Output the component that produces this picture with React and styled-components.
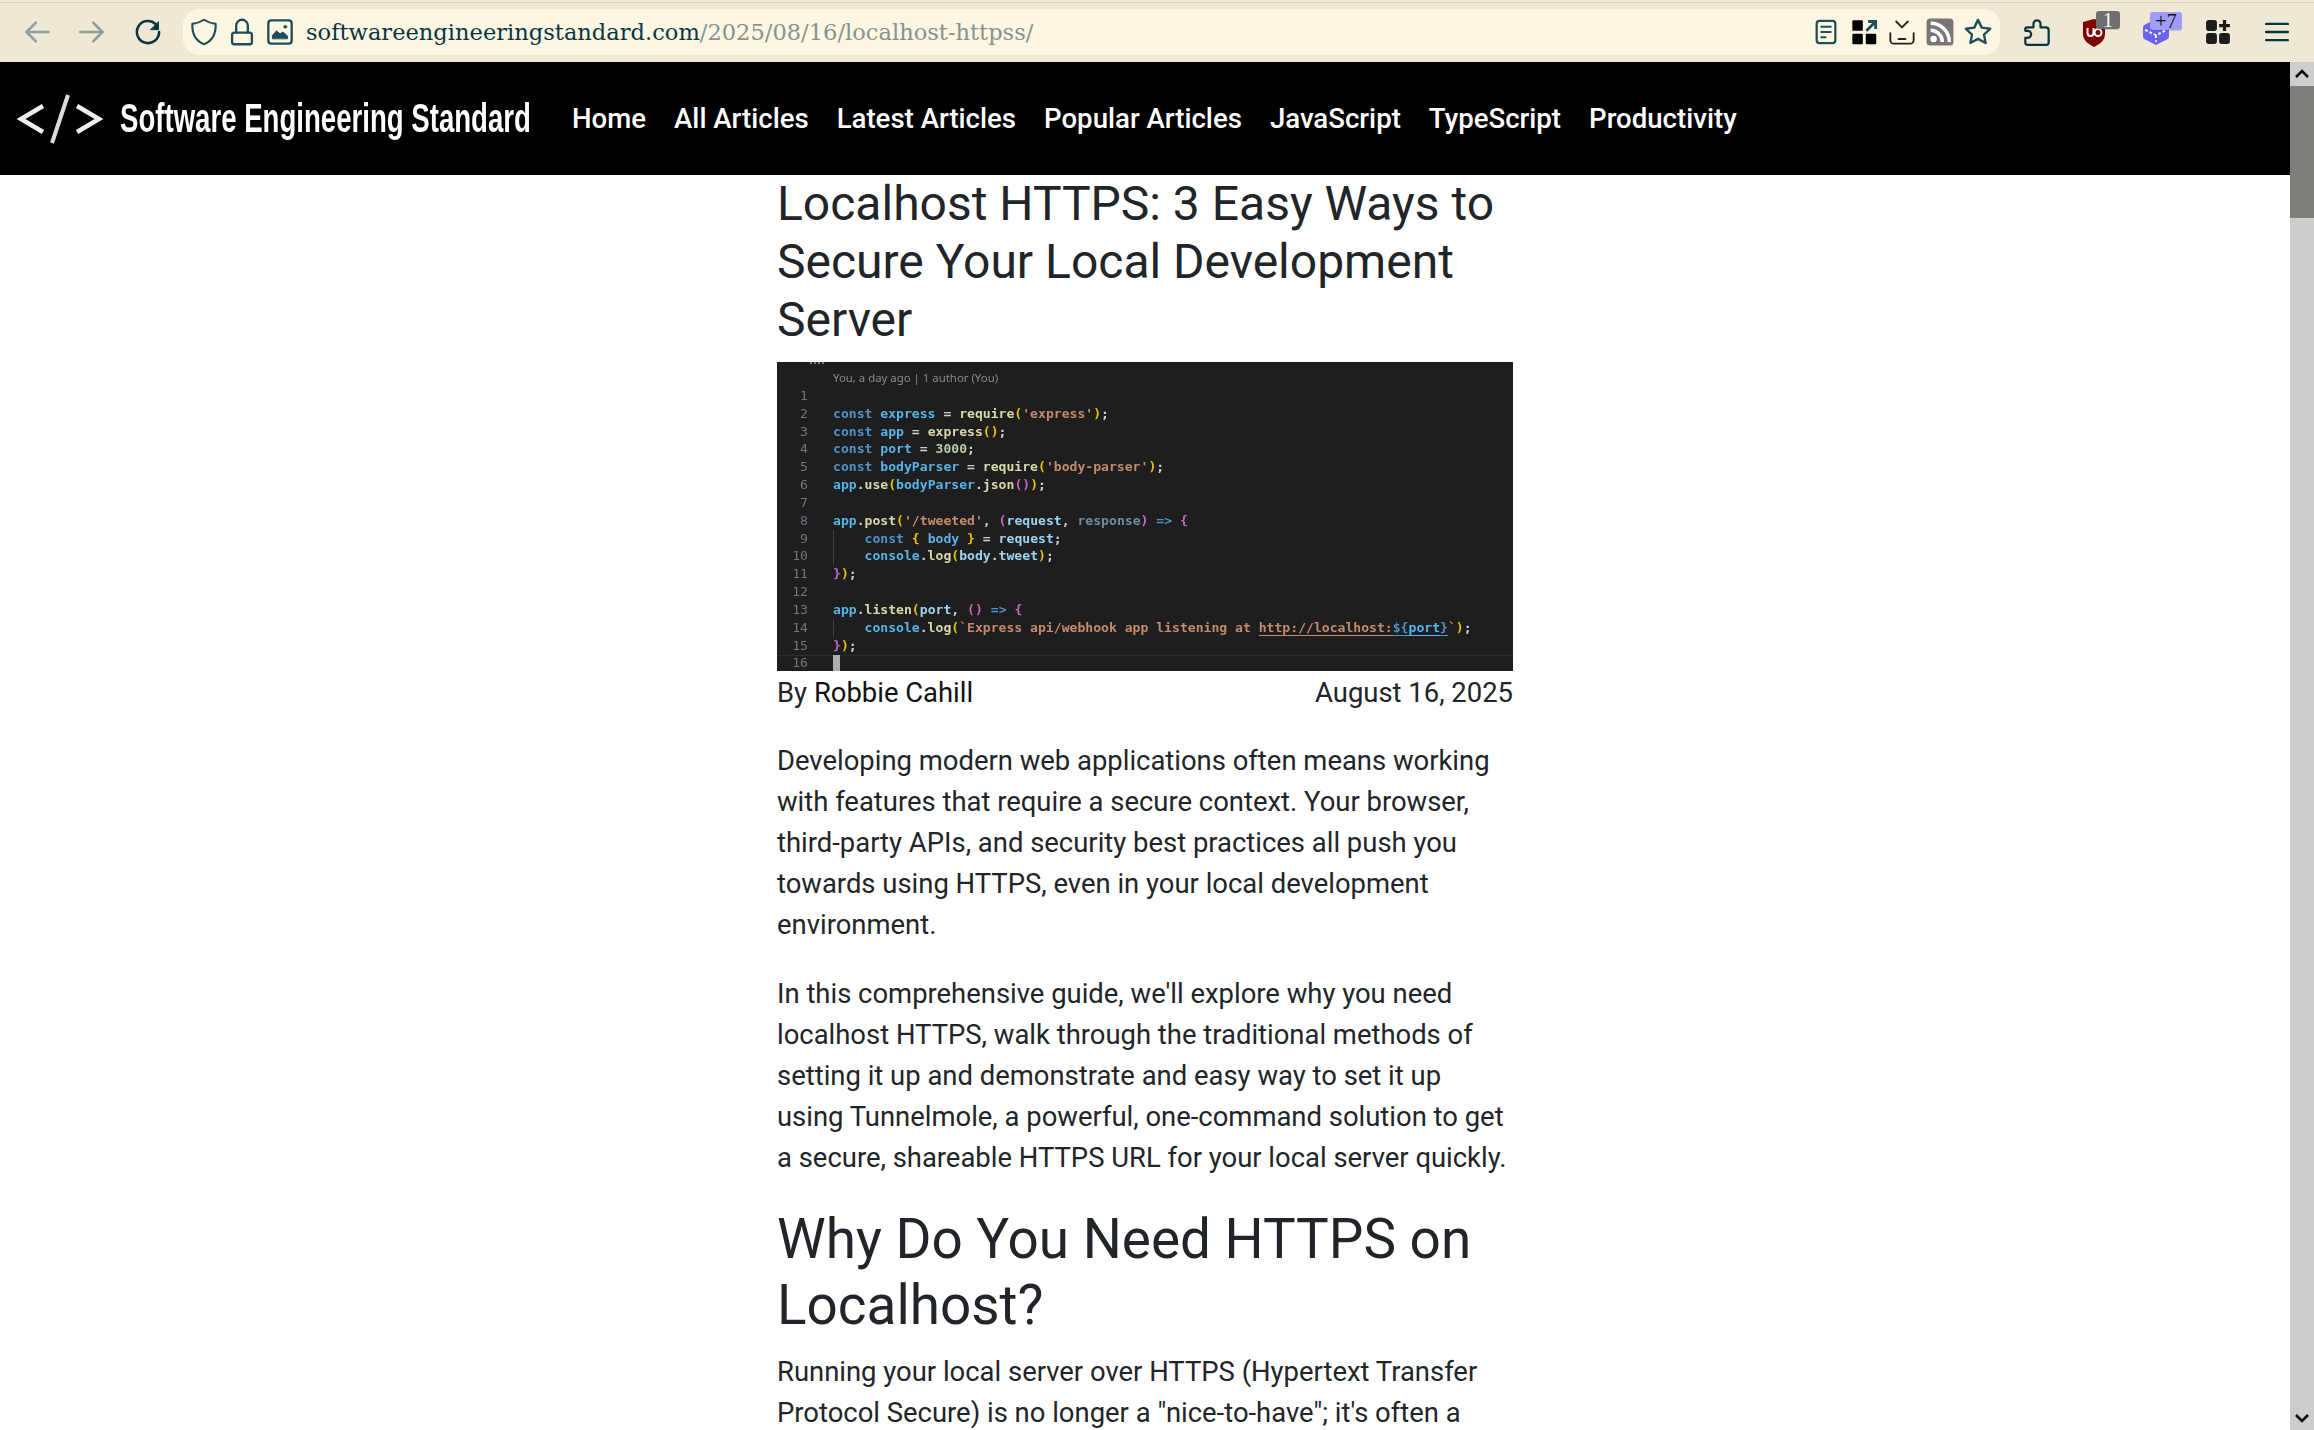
import React from 'react';
import styled, { createGlobalStyle } from 'styled-components';

const GlobalStyle = createGlobalStyle`
  html, body {
    margin: 0;
    padding: 0;
    height: 100%;
    overflow: hidden;
    background: #fff;
  }
  body {
    font-family: Roboto, "Liberation Sans", sans-serif;
    color: #212529;
  }
`;

const Window = styled.div`
  display: flex;
  flex-direction: column;
  height: 1430px;
  overflow: hidden;
`;

const Toolbar = styled.header`
  display: flex;
  align-items: center;
  box-sizing: border-box;
  height: 62px;
  flex: none;
  padding-top: 2px;
  background: linear-gradient(#eee8d5 0 2px, #d9d3c1 2px 3px, #eee8d5 3px);
`;

const NavButton = styled.span`
  display: flex;
  align-items: center;
  justify-content: center;
  width: ${(props) => props.$width || 38}px;
  flex: none;
  position: relative;
  color: ${(props) => (props.$dim ? '#8f9f9c' : '#073642')};
`;

const BackGroup = styled.div`
  display: flex;
  align-items: center;
  padding-left: 9px;
  width: 183px;
  box-sizing: border-box;
  flex: none;
`;

const UrlBar = styled.div`
  display: flex;
  align-items: center;
  box-sizing: border-box;
  width: 1817px;
  height: 46px;
  flex: none;
  padding: 0 3px 0 2px;
  background: #fdf6e3;
  border-radius: 16px;
`;

const UrlIcon = styled.span`
  display: flex;
  align-items: center;
  justify-content: center;
  width: 38px;
  flex: none;
  color: #1f4e5a;
`;

const UrlText = styled.div`
  flex: 1;
  font-family: "DejaVu Serif", serif;
  font-size: 22.57px;
  color: #073642;
  padding-left: 7px;
  white-space: nowrap;
`;

const UrlPath = styled.span`
  color: #86938f;
`;

const ToolbarEnd = styled.div`
  display: flex;
  align-items: center;
  flex: 1;
  padding-left: 18px;
`;

const Badge = styled.span`
  position: absolute;
  top: -7px;
  left: ${(props) => props.$left}px;
  height: 18px;
  width: ${(props) => props.$wide}px;
  border-radius: 3px;
  font-family: "Liberation Serif", serif;
  font-size: 20px;
  line-height: 18px;
  text-align: center;
  color: ${(props) => props.$color};
  background: ${(props) => props.$bg};
  box-shadow: 0 1px 1px rgba(0, 0, 0, 0.15);
`;

const Body = styled.div`
  display: flex;
  flex: 1;
  min-height: 0;
`;

const Page = styled.div`
  flex: 1;
  min-width: 0;
  overflow: hidden;
`;

const Scrollbar = styled.div`
  display: flex;
  flex-direction: column;
  width: 24px;
  flex: none;
  background: #cdcdcd;
`;

const ScrollButton = styled.div`
  display: flex;
  align-items: center;
  justify-content: center;
  height: 24px;
  flex: none;
`;

const ScrollThumb = styled.div`
  height: 132px;
  flex: none;
  background: #7f7f7a;
`;

const ScrollTrack = styled.div`
  flex: 1;
`;

const SiteNav = styled.nav`
  display: flex;
  align-items: center;
  height: 113px;
  background: #000;
  padding-left: 16px;
`;

const Logo = styled.svg`
  width: 88px;
  height: 50px;
  flex: none;
`;

const BrandBox = styled.div`
  width: 452px;
  margin-left: 16px;
  flex: none;
`;

const Brand = styled.span`
  display: inline-block;
  font-family: "Liberation Sans", sans-serif;
  font-size: 41px;
  font-weight: 700;
  color: #fff;
  white-space: nowrap;
  transform-origin: left center;
  transform: scaleX(0.673);
`;

const NavLinks = styled.div`
  display: flex;
  gap: 28px;
`;

const NavLink = styled.a`
  font-size: 27.6px;
  font-weight: 500;
  color: #fff;
  white-space: nowrap;
`;

const Article = styled.article`
  width: 736px;
  margin: 0 auto;
  font-size: 27.43px;
  line-height: 41.14px;
`;

const Title = styled.h1`
  margin: 0 0 13px;
  font-size: 48px;
  line-height: 58px;
  font-weight: 400;
`;

const CodeShot = styled.div`
  box-sizing: border-box;
  position: relative;
  height: 309px;
  padding-top: 7px;
  overflow: hidden;
  background: #1e1e1e;
  font-family: "DejaVu Sans Mono", monospace;
  font-size: 13.1px;
  line-height: 17.85px;
  font-weight: 700;
  color: #9cdcfe;
  filter: blur(0.4px);
`;

const TopSpecks = styled.span`
  position: absolute;
  top: 0;
  left: 33px;
  width: 14px;
  border-top: 2px dotted #777;
`;

const Blame = styled.div`
  padding-left: 56px;
  font-family: "Noto Sans", sans-serif;
  font-size: 11.4px;
  font-weight: 400;
  color: #8a8a8a;
`;

const CodeLine = styled.div`
  display: flex;
  white-space: pre;
`;

const LastLine = styled(CodeLine)`
  height: 16px;
  line-height: 16px;
  box-shadow: inset 0 1px 0 #2c2c2c;
`;

const Gutter = styled.span`
  width: 31px;
  flex: none;
  text-align: right;
  color: #6e7681;
  font-weight: 400;
  margin-right: 25px;
`;

const CodeText = styled.span`
  box-shadow: ${(props) => (props.$guide ? 'inset 1px 0 0 #404040' : 'none')};
`;

const Token = styled.span`
  position: relative;
  color: ${(props) => props.$c};
  ${(props) => props.$under && `box-shadow: 0 1px 0 ${props.$c};`}
  ${(props) => props.$dots && `
    &::after {
      content: '...';
      position: absolute;
      left: 0;
      top: 6px;
      font-size: 7px;
      font-weight: 400;
      letter-spacing: 0;
      color: #999;
    }
  `}
`;

const Cursor = styled.span`
  display: inline-block;
  width: 7px;
  height: 16px;
  background: #aeafad;
`;

const Byline = styled.div`
  display: flex;
  justify-content: space-between;
  padding-top: 2px;
  margin-bottom: 26.5px;
`;

const Author = styled.a`
  color: #111;
`;

const Paragraph = styled.p`
  margin: 0 0 27.43px;
`;

const SectionTitle = styled.h2`
  margin: 0 0 13.7px;
  font-size: 54.86px;
  line-height: 65.8px;
  font-weight: 400;
`;

const Stroke = ({ size = 28, sw = 2.2, children }) => (
  <svg
    width={size}
    height={size}
    viewBox="0 0 24 24"
    fill="none"
    stroke="currentColor"
    strokeWidth={sw}
    strokeLinecap="round"
    strokeLinejoin="round"
  >
    {children}
  </svg>
);

const kw = '#4e92c9';
const vr = '#55b4e8';
const nm = '#9cd3f2';
const fn = '#d8d8a8';
const st = '#c48a6c';
const pu = '#cfcfcf';
const y1 = '#e8c300';
const p1 = '#c868c4';
const dg = '#6f8ba0';

const codeLines = [
  { tokens: [] },
  { tokens: [[kw, 'const '], [vr, 'express'], [pu, ' = '], [fn, 'require', 0, 1], [y1, '('], [st, "'express'"], [y1, ')'], [pu, ';']] },
  { tokens: [[kw, 'const '], [vr, 'app'], [pu, ' = '], [fn, 'express'], [y1, '()'], [pu, ';']] },
  { tokens: [[kw, 'const '], [vr, 'port'], [pu, ' = '], ['#b5cea8', '3000'], [pu, ';']] },
  { tokens: [[kw, 'const '], [vr, 'bodyParser'], [pu, ' = '], [fn, 'require'], [y1, '('], [st, "'body-parser'"], [y1, ')'], [pu, ';']] },
  { tokens: [[vr, 'app'], [pu, '.'], [fn, 'use'], [y1, '('], [vr, 'bodyParser'], [pu, '.'], [fn, 'json'], [p1, '()'], [y1, ')'], [pu, ';']] },
  { tokens: [] },
  { tokens: [[vr, 'app'], [pu, '.'], [fn, 'post'], [y1, '('], [st, "'/tweeted'"], [pu, ', '], [p1, '('], [nm, 'request'], [pu, ', '], [dg, 'response'], [p1, ')'], [kw, ' => '], [p1, '{']] },
  { guide: true, tokens: [[kw, '    const '], [y1, '{ '], [vr, 'body'], [y1, ' }'], [pu, ' = '], [nm, 'request'], [pu, ';']] },
  { guide: true, tokens: [[vr, '    console'], [pu, '.'], [fn, 'log'], [y1, '('], [nm, 'body'], [pu, '.'], [nm, 'tweet'], [y1, ')'], [pu, ';']] },
  { tokens: [[p1, '}'], [y1, ')'], [pu, ';']] },
  { tokens: [] },
  { tokens: [[vr, 'app'], [pu, '.'], [fn, 'listen'], [y1, '('], [nm, 'port'], [pu, ', '], [p1, '()'], [kw, ' => '], [p1, '{']] },
  { guide: true, tokens: [[vr, '    console'], [pu, '.'], [fn, 'log'], [y1, '('], [st, '`Express api/webhook app listening at '], [st, 'http://localhost:', 1], [kw, '${', 1], ['#4fb8f5', 'port', 1], [kw, '}', 1], [st, '`'], [y1, ')'], [pu, ';']] },
  { tokens: [[p1, '}'], [y1, ')'], [pu, ';']] },
];

const navItems = [
  'Home',
  'All Articles',
  'Latest Articles',
  'Popular Articles',
  'JavaScript',
  'TypeScript',
  'Productivity',
];

const App = () => (
  <Window>
    <GlobalStyle />
    <Toolbar>
      <BackGroup>
        <NavButton $dim $width={55.5}>
          <Stroke><path d="M22 12H3" /><path d="M11 4l-8 8 8 8" /></Stroke>
        </NavButton>
        <NavButton $dim $width={55.5}>
          <Stroke><path d="M2 12h19" /><path d="M13 4l8 8-8 8" /></Stroke>
        </NavButton>
        <NavButton $width={55.5}>
          <Stroke>
            <path d="M21.500 12a9.500 9.500 0 1 1-3-6.900" />
            <path d="M21 3.500v6.500h-6.500z" fill="currentColor" strokeWidth="0.800" />
          </Stroke>
        </NavButton>
      </BackGroup>
      <UrlBar>
        <UrlIcon>
          <Stroke sw={1.8}><path d="M12 1.500c3 2 6 3 10 3.500.3 8-2 14.500-10 17.500C4 19.500 1.700 13 2 5c4-.5 7-1.500 10-3.500z" /></Stroke>
        </UrlIcon>
        <UrlIcon>
          <Stroke sw={2}><rect x="3.500" y="12.500" width="17" height="10" rx="2" /><path d="M7 12.500V6.500a5 5 0 0 1 10 0v6" /></Stroke>
        </UrlIcon>
        <UrlIcon>
          <Stroke sw={2}>
            <rect x="2" y="2" width="20" height="20" rx="2.500" />
            <path d="M5.500 17.500v-2.500l3.500-4 3 2.500 2.500-1.500 4 3.500v2z" fill="currentColor" strokeWidth="0.800" />
            <circle cx="16.500" cy="7.500" r="1.300" fill="currentColor" strokeWidth="0.500" />
          </Stroke>
        </UrlIcon>
        <UrlText>
          softwareengineeringstandard.com<UrlPath>/2025/08/16/localhost-httpss/</UrlPath>
        </UrlText>
        <UrlIcon>
          <Stroke sw={1.9}>
            <rect x="4" y="2.500" width="16" height="19" rx="2.500" />
            <path d="M8 7.500h8M8 12h8M8 16.500h3.500" />
          </Stroke>
        </UrlIcon>
        <UrlIcon>
          <svg width="28" height="28" viewBox="0 0 24 24">
            <rect x="2" y="2" width="9" height="9" rx="1" fill="#000" />
            <rect x="2" y="13.500" width="9" height="9" rx="1" fill="#000" />
            <rect x="13.500" y="13.500" width="9" height="9" rx="1" fill="#000" />
            <path d="M14 11l7-7M15.500 3H22V9.500" stroke="#1f4e5a" strokeWidth="2.400" fill="none" />
          </svg>
        </UrlIcon>
        <UrlIcon>
          <svg width="28" height="28" viewBox="0 0 24 24" fill="none" stroke="#222" strokeWidth="1.600" strokeLinecap="round" strokeLinejoin="round">
            <path d="M7 3l5 5 5-5" />
            <path d="M2 13v6a3 3 0 0 0 3 3h14a3 3 0 0 0 3-3v-6" />
            <path d="M9 18h6" />
          </svg>
        </UrlIcon>
        <UrlIcon>
          <svg width="28" height="28" viewBox="0 0 24 24">
            <rect x="0.500" y="0.500" width="23" height="23" rx="3" fill="#777" />
            <circle cx="6.500" cy="18" r="2.800" fill="#fff" />
            <path d="M4 10.500A10 10 0 0 1 14 20.500" stroke="#fff" strokeWidth="3" fill="none" />
            <path d="M4 4.500A16 16 0 0 1 20 20.500" stroke="#fff" strokeWidth="3" fill="none" />
          </svg>
        </UrlIcon>
        <UrlIcon>
          <Stroke sw={1.9} size={30}><path d="M12 2.300l3 6.200 6.800.9-5 4.700 1.300 6.700-6.100-3.300-6.100 3.300 1.300-6.700-5-4.700 6.800-.9z" /></Stroke>
        </UrlIcon>
      </UrlBar>
      <ToolbarEnd>
        <NavButton $width={38}>
          <Stroke sw={1.9} size={28}>
            <path d="M4 23a2 2 0 0 1-2-2v-4h2a3 3 0 0 0 0-6H2V9.500A1.500 1.500 0 0 1 3.500 8H9V5a3 3 0 0 1 6 0v3h4.500A2.500 2.500 0 0 1 22 10.500V21a2 2 0 0 1-2 2z" />
          </Stroke>
        </NavButton>
        <NavButton $width={19} />
        <NavButton $width={38}>
          <svg width="24" height="29" viewBox="0 0 24 29">
            <path d="M12 1l11 3v12c0 6-5 10-11 13C6 26 1 22 1 16V4z" fill="#800000" />
            <path d="M5.500 10v5a3 3 0 0 0 6 0v-5" stroke="#fff" strokeWidth="2" fill="none" />
            <circle cx="16" cy="14.500" r="3.500" stroke="#fff" strokeWidth="2" fill="none" />
          </svg>
          <Badge $left={21} $wide={24} $color="#fff" $bg="#6f6f6f">1</Badge>
        </NavButton>
        <NavButton $width={24} />
        <NavButton $width={38}>
          <svg width="26" height="26" viewBox="0 0 24 24">
            <path d="M12 0l10 5c1 .5 2 1.500 2 3v8c0 1.500-1 2.500-2 3l-10 5-10-5c-1-.5-2-1.500-2-3V8c0-1.500 1-2.500 2-3z" fill="#6b63f0" />
            <path d="M2 10l10 5 10-5M12 15v6" stroke="#fff" strokeWidth="1.800" strokeDasharray="2.500 2" fill="none" />
          </svg>
          <Badge $left={13} $wide={32} $color="#111" $bg="#a09cf8">+7</Badge>
        </NavButton>
        <NavButton $width={24} />
        <NavButton $width={38}>
          <svg width="26" height="26" viewBox="0 0 24 24" fill="#1c1c1c">
            <rect x="1" y="1" width="10" height="10" rx="2.500" />
            <rect x="1" y="13" width="10" height="10" rx="2.500" />
            <rect x="13" y="13" width="10" height="10" rx="2.500" />
            <path d="M16.500 1h3v3.500H23v3h-3.500V11h-3V7.500H13v-3h3.500z" />
          </svg>
        </NavButton>
        <NavButton $width={21} />
        <NavButton $width={38}>
          <Stroke sw={2.200} size={26}><path d="M2 4.500h20M2 12h20M2 19.500h20" /></Stroke>
        </NavButton>
      </ToolbarEnd>
    </Toolbar>
    <Body>
      <Page>
        <SiteNav>
          <Logo viewBox="0 0 88 50">
            <path d="M27 12L5 25l22 13M61 12l22 13-22 13" stroke="#eee" strokeWidth="4.500" fill="none" />
            <path d="M52 1L36 49" stroke="#ddd" strokeWidth="4" fill="none" />
          </Logo>
          <BrandBox>
            <Brand>Software Engineering Standard</Brand>
          </BrandBox>
          <NavLinks>
            {navItems.map((item) => (
              <NavLink key={item}>{item}</NavLink>
            ))}
          </NavLinks>
        </SiteNav>
        <Article>
          <Title>Localhost HTTPS: 3 Easy Ways to Secure Your Local Development Server</Title>
          <CodeShot>
            <TopSpecks />
            <Blame>You, a day ago | 1 author (You)</Blame>
            {codeLines.map((line, i) => (
              <CodeLine key={i}>
                <Gutter>{i + 1}</Gutter>
                <CodeText $guide={line.guide}>
                  {line.tokens.map(([c, text, under, dots], j) => (
                    <Token key={j} $c={c} $under={under} $dots={dots}>{text}</Token>
                  ))}
                </CodeText>
              </CodeLine>
            ))}
            <LastLine>
              <Gutter>16</Gutter>
              <Cursor />
            </LastLine>
          </CodeShot>
          <Byline>
            <span>By <Author>Robbie Cahill</Author></span>
            <span>August 16, 2025</span>
          </Byline>
          <Paragraph>
            Developing modern web applications often means working with features that require a secure context. Your browser, third-party APIs, and security best practices all push you towards using HTTPS, even in your local development environment.
          </Paragraph>
          <Paragraph>
            In this comprehensive guide, we'll explore why you need localhost HTTPS, walk through the traditional methods of setting it up and demonstrate and easy way to set it up using Tunnelmole, a powerful, one-command solution to get a secure, shareable HTTPS URL for your local server quickly.
          </Paragraph>
          <SectionTitle>Why Do You Need HTTPS on Localhost?</SectionTitle>
          <Paragraph>
            Running your local server over HTTPS (Hypertext Transfer Protocol Secure) is no longer a "nice-to-have"; it's often a
          </Paragraph>
        </Article>
      </Page>
      <Scrollbar>
        <ScrollButton>
          <svg width="14" height="10" viewBox="0 0 14 10"><path d="M1 8l6-6 6 6" stroke="#000" strokeWidth="2.500" fill="none" /></svg>
        </ScrollButton>
        <ScrollThumb />
        <ScrollTrack />
        <ScrollButton>
          <svg width="14" height="10" viewBox="0 0 14 10"><path d="M1 2l6 6 6-6" stroke="#000" strokeWidth="2.500" fill="none" /></svg>
        </ScrollButton>
      </Scrollbar>
    </Body>
  </Window>
);

export default App;
